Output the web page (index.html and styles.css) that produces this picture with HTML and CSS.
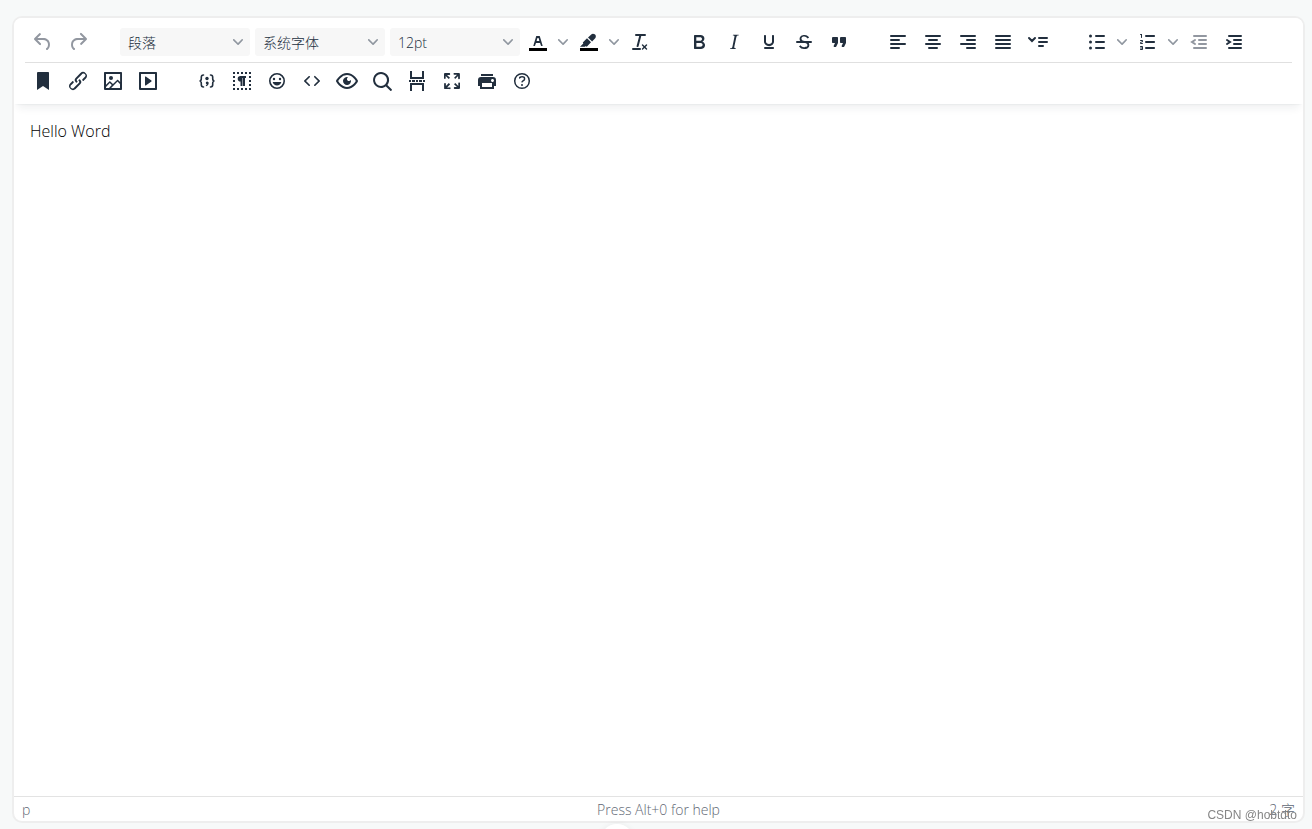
FILE: index.html
```html
<!DOCTYPE html>
<html lang="zh-CN">
<head>
<meta charset="utf-8">
<title>Editor</title>
<link rel="stylesheet" href="styles.css">
</head>
<body>
<svg class="sprite" aria-hidden="true">
  <symbol id="chevron" viewBox="0 0 10 10"><path d="M8.7 2.2c.3-.3.8-.3 1 0 .4.4.4.9 0 1.2L5.7 7.8c-.3.3-.9.3-1.2 0L.2 3.4a.8.8 0 0 1 0-1.2c.3-.3.8-.3 1.1 0L5 6l3.7-3.8Z"/></symbol>
</svg>
<main class="editor">
  <header class="header">
    <div class="toolbar toolbar-first">
      <div class="group">
        <button class="tool" aria-label="撤销" disabled><svg viewBox="0 0 24 24"><path d="M6.4 8H12c3.7 0 6.2 2 6.8 5.1.6 2.7-.4 5.6-2.3 6.8a1 1 0 0 1-1-1.8c1.1-.6 1.8-2.7 1.4-4.6-.5-2.1-2.1-3.5-4.9-3.5H6.4l3.3 3.3a1 1 0 1 1-1.4 1.4l-5-5a1 1 0 0 1 0-1.4l5-5a1 1 0 0 1 1.4 1.4L6.4 8Z"/></svg></button>
        <button class="tool" aria-label="重做" disabled><svg viewBox="0 0 24 24"><path d="M17.6 10H12c-2.8 0-4.4 1.4-4.9 3.5-.4 2 .3 4 1.4 4.6a1 1 0 1 1-1 1.8c-2-1.2-2.9-4.1-2.3-6.8.6-3 3-5.1 6.8-5.1h5.6l-3.3-3.3a1 1 0 1 1 1.4-1.4l5 5a1 1 0 0 1 0 1.4l-5 5a1 1 0 0 1-1.4-1.4l3.3-3.3Z"/></svg></button>
      </div>
      <div class="group">
        <div class="picker"><select aria-label="段落格式"><option>段落</option></select><svg class="chevron"><use href="#chevron"/></svg></div>
        <div class="picker"><select aria-label="字体"><option>系统字体</option></select><svg class="chevron"><use href="#chevron"/></svg></div>
        <div class="picker picker-last"><select aria-label="字号"><option>12pt</option></select><svg class="chevron"><use href="#chevron"/></svg></div>
        <div class="split">
          <button class="tool" aria-label="文字颜色"><svg viewBox="0 0 24 24"><path class="swatch" d="M3 18h18v3H3z"/><path d="M8.7 16h-.8a.5.5 0 0 1-.5-.6l2.7-9c.1-.3.3-.4.5-.4h2.8c.2 0 .4.1.5.4l2.7 9a.5.5 0 0 1-.5.6h-.8a.5.5 0 0 1-.4-.4l-.7-2.2c0-.3-.3-.4-.5-.4h-3.4c-.2 0-.4.1-.5.4l-.7 2.2c0 .3-.2.4-.4.4Zm2.6-7.6-.6 2a.5.5 0 0 0 .5.6h1.6a.5.5 0 0 0 .5-.6l-.6-2c0-.3-.3-.4-.5-.4h-.4c-.2 0-.4.1-.5.4Z"/></svg></button>
          <button class="more" aria-label="选择文字颜色"><svg class="chevron"><use href="#chevron"/></svg></button>
        </div>
        <div class="split">
          <button class="tool" aria-label="背景颜色"><svg viewBox="0 0 24 24"><path class="swatch" d="M3 18h18v3H3z"/><path d="M8 16.700H3l3.300-3.300-.5-.9L10 8.300l4 4-4 4.200c-.2.2-.6.2-.8 0l-.5-.5ZM11 7.400l3-2.700a3 3 0 0 1 3.700-.4l.6.500c.8.900.7 2.600-.1 3.500l-3.100 3.200Z"/></svg></button>
          <button class="more" aria-label="选择背景颜色"><svg class="chevron"><use href="#chevron"/></svg></button>
        </div>
        <button class="tool" aria-label="清除格式"><svg viewBox="0 0 24 24"><path d="M13.2 6a1 1 0 0 1 0 .2l-2.6 10a1 1 0 0 1-1 .8h-.2a.8.8 0 0 1-.8-1l2.6-10H8a1 1 0 1 1 0-2h9a1 1 0 0 1 0 2h-3.8ZM5 18h7a1 1 0 0 1 0 2H5a1 1 0 0 1 0-2Zm13 1.5L16.5 18 15 19.5a.7.7 0 0 1-1-1l1.5-1.5-1.5-1.5a.7.7 0 0 1 1-1l1.5 1.5 1.5-1.5a.7.7 0 0 1 1 1L17.5 17l1.5 1.5a.7.7 0 0 1-1 1Z"/></svg></button>
      </div>
      <div class="group">
        <button class="tool" aria-label="粗体"><svg viewBox="0 0 24 24"><path d="M7.8 19c-.3 0-.5 0-.6-.2l-.2-.5V5.7c0-.2 0-.4.2-.5l.6-.2h5c1.5 0 2.7.3 3.5 1 .7.6 1.1 1.4 1.1 2.5a3 3 0 0 1-.6 1.9c-.4.6-1 1-1.6 1.2.4.1.9.3 1.3.6s.8.7 1 1.2c.4.4.5 1 .5 1.6 0 1.3-.4 2.3-1.3 3-.8.7-2.1 1-3.8 1H7.8Zm5-8.3c.6 0 1.2-.1 1.6-.5.4-.3.6-.7.6-1.3 0-1.1-.8-1.700-2.300-1.700H9.300v3.500h3.400Zm.5 6c.7 0 1.300-.1 1.700-.4.4-.4.6-.9.6-1.500s-.2-1-.7-1.400c-.4-.3-1-.4-2-.4H9.400v3.800h4Z"/></svg></button>
        <button class="tool" aria-label="斜体"><svg viewBox="0 0 24 24"><path d="m16.700 4.700-.1.9h-.3c-.6 0-1 0-1.400.3-.3.3-.4.6-.5 1.100l-2.100 9.800v.6c0 .5.4.8 1.400.8h.2l-.2.8H8l.2-.8h.2c1.100 0 1.800-.5 2-1.500l2-9.800.1-.5c0-.6-.4-.8-1.400-.8h-.3l.2-.9h5.700Z"/></svg></button>
        <button class="tool" aria-label="下划线"><svg viewBox="0 0 24 24"><path d="M16 5c.6 0 1 .4 1 1v5.500a4 4 0 0 1-.4 1.800l-1 1.400a5.300 5.300 0 0 1-5.500 1 5 5 0 0 1-1.600-1c-.5-.4-.8-.9-1.100-1.400a4 4 0 0 1-.4-1.800V6c0-.6.4-1 1-1s1 .4 1 1v5.500c0 .3 0 .6.2 1l.6.7a3.300 3.300 0 0 0 2.200.8 3.400 3.400 0 0 0 2.200-.8c.3-.2.4-.5.6-.8l.2-.9V6c0-.6.4-1 1-1ZM8 17h8c.6 0 1 .4 1 1s-.4 1-1 1H8a1 1 0 0 1 0-2Z"/></svg></button>
        <button class="tool" aria-label="删除线"><svg viewBox="0 0 24 24"><path d="M15.600 8.500c-.5-.7-1-1.100-1.300-1.300-.6-.4-1.300-.6-2-.6-2.700 0-2.800 1.700-2.800 2.100 0 1.600 1.800 2 3.200 2.300 4.400.9 4.600 2.800 4.600 3.900 0 1.400-.7 4.100-5 4.100A6.200 6.200 0 0 1 7 16.400l1.500-1.100c.4.6 1.600 2 3.700 2 1.600 0 2.500-.4 3-1.200.4-.8.3-2-.8-2.600-.7-.4-1.600-.7-2.900-1-1-.2-3.900-.8-3.900-3.600C7.600 6 10.300 5 12.400 5c2.900 0 4.200 1.600 4.700 2.400l-1.500 1.100Z"/><path d="M5 11h14a1 1 0 0 1 0 2H5a1 1 0 0 1 0-2Z"/></svg></button>
        <button class="tool" aria-label="引用"><svg viewBox="0 0 24 24"><path d="M7.500 17h.9c.4 0 .7-.2.9-.6L11 13V8c0-.6-.4-1-1-1H6a1 1 0 0 0-1 1v4c0 .6.4 1 1 1h2l-1.300 2.700a1 1 0 0 0 .8 1.300Zm8 0h.9c.4 0 .7-.2.9-.6L19 13V8c0-.6-.4-1-1-1h-4a1 1 0 0 0-1 1v4c0 .6.4 1 1 1h2l-1.300 2.700a1 1 0 0 0 .8 1.300Z"/></svg></button>
      </div>
      <div class="group">
        <button class="tool" aria-label="左对齐"><svg class="lines" viewBox="0 0 24 24"><path d="M5 6h14M5 10h8M5 14h14M5 18h8"/></svg></button>
        <button class="tool" aria-label="居中"><svg class="lines" viewBox="0 0 24 24"><path d="M5 6h14M8 10h8M5 14h14M8 18h8"/></svg></button>
        <button class="tool" aria-label="右对齐"><svg class="lines" viewBox="0 0 24 24"><path d="M5 6h14M11 10h8M5 14h14M11 18h8"/></svg></button>
        <button class="tool" aria-label="两端对齐"><svg class="lines" viewBox="0 0 24 24"><path d="M5 6h14M5 10h14M5 14h14M5 18h14"/></svg></button>
        <button class="tool" aria-label="行高"><svg class="lines" viewBox="0 0 24 24"><path d="M13 8h8M13 12h8M13 16h4M3 8l3 3 3-3"/></svg></button>
      </div>
      <div class="group">
        <div class="split">
          <button class="tool" aria-label="项目符号"><svg class="lines" viewBox="0 0 24 24"><path d="M11 6h8M11 12h8M11 18h8"/><g class="solid"><circle cx="5.500" cy="6" r="1.500"/><circle cx="5.500" cy="12" r="1.500"/><circle cx="5.500" cy="18" r="1.500"/></g></svg></button>
          <button class="more" aria-label="项目符号样式"><svg class="chevron"><use href="#chevron"/></svg></button>
        </div>
        <div class="split">
          <button class="tool" aria-label="编号列表"><svg viewBox="0 0 24 24"><path d="M10 17h8c.6 0 1 .4 1 1s-.4 1-1 1h-8a1 1 0 0 1 0-2Zm0-6h8c.6 0 1 .4 1 1s-.4 1-1 1h-8a1 1 0 0 1 0-2Zm0-6h8c.6 0 1 .4 1 1s-.4 1-1 1h-8a1 1 0 1 1 0-2ZM6 4v3.500c0 .3-.2.5-.5.5a.5.5 0 0 1-.5-.5V5h-.5a.5.5 0 0 1 0-1H6Zm-1 8.800.2.2h1.300c.3 0 .5.2.5.5s-.2.5-.5.5H4.900a1 1 0 0 1-.9-1V13c0-.4.3-.8.6-1l1.200-.4.2-.3a.2.2 0 0 0-.2-.2H4.500a.5.5 0 0 1-.5-.5c0-.3.2-.5.5-.5h1.600c.5 0 .9.4.9 1v.1c0 .4-.3.8-.6 1l-1.200.4-.2.3ZM7 17v2c0 .6-.4 1-1 1H4.500a.5.5 0 0 1 0-1h1.200c.2 0 .3-.1.3-.3 0-.2-.1-.3-.3-.3H4.400a.4.4 0 1 1 0-.8h1.300c.2 0 .3-.1.3-.3 0-.2-.1-.3-.3-.3H4.500a.5.5 0 1 1 0-1H6c.6 0 1 .4 1 1Z"/></svg></button>
          <button class="more" aria-label="编号样式"><svg class="chevron"><use href="#chevron"/></svg></button>
        </div>
        <button class="tool" aria-label="减少缩进" disabled><svg class="lines" viewBox="0 0 24 24"><path d="M7 6h12M12 10h7M12 14h7M7 18h12M8 10l-3 2 3 2"/></svg></button>
        <button class="tool" aria-label="增加缩进"><svg class="lines" viewBox="0 0 24 24"><path d="M7 6h12M12 10h7M12 14h7M7 18h12M5 10l3 2-3 2"/></svg></button>
      </div>
    </div>
    <div class="toolbar">
      <div class="group">
        <button class="tool" aria-label="锚点"><svg viewBox="0 0 24 24"><path d="M6 4v17l6-4 6 4V4c0-.6-.4-1-1-1H7a1 1 0 0 0-1 1Z"/></svg></button>
        <button class="tool" aria-label="链接"><svg viewBox="0 0 24 24"><path d="M6.2 12.3a1 1 0 0 1 1.4 1.4l-2 2a2 2 0 1 0 2.600 2.800l4.800-4.800a1 1 0 0 0 0-1.400 1 1 0 1 1 1.400-1.300 2.900 2.900 0 0 1 0 4L9.600 20a3.900 3.900 0 0 1-5.500-5.500l2-2Zm11.600-.6a1 1 0 0 1-1.400-1.400l2-2a2 2 0 1 0-2.600-2.800L11 10.300a1 1 0 0 0 0 1.400A1 1 0 1 1 9.600 13a2.900 2.900 0 0 1 0-4L14.400 4a3.900 3.900 0 0 1 5.500 5.500l-2 2Z"/></svg></button>
        <button class="tool" aria-label="图片"><svg viewBox="0 0 24 24"><path fill-rule="evenodd" d="m5 15.700 3.300-3.200c.3-.3.7-.3 1 0L12 15l4.100-4c.3-.4.8-.4 1 0l2 1.900V5H5v10.700ZM5 18v1h3l2.800-2.900-2-2L5 17.900Zm14-3-2.500-2.400-6.400 6.500H19v-4ZM4 3h16c.6 0 1 .4 1 1v16c0 .6-.4 1-1 1H4a1 1 0 0 1-1-1V4c0-.6.4-1 1-1Z"/><circle cx="10" cy="9" r="2"/></svg></button>
        <button class="tool" aria-label="媒体"><svg viewBox="0 0 24 24"><path d="M4 3h16c.6 0 1 .4 1 1v16c0 .6-.4 1-1 1H4a1 1 0 0 1-1-1V4c0-.6.4-1 1-1Zm1 2v14h14V5H5Zm4.800 2.600 5.600 4a.5.5 0 0 1 0 .8l-5.600 4A.5.5 0 0 1 9 16V8a.5.5 0 0 1 .8-.4Z" fill-rule="evenodd"/></svg></button>
      </div>
      <div class="group">
        <button class="tool" aria-label="代码示例"><svg class="outline" viewBox="0 0 24 24"><path d="M8.500 6C7 6 6.300 7 6.300 8.200v1.600c0 1.300-.7 2.200-1.800 2.200 1.100 0 1.800.9 1.800 2.200v1.600C6.300 17 7 18 8.500 18M15.500 6c1.500 0 2.200 1 2.200 2.200v1.600c0 1.300.7 2.200 1.800 2.200-1.100 0-1.800.9-1.800 2.200v1.600c0 1.200-.7 2.200-2.200 2.200"/><g class="solid"><circle cx="12" cy="9.500" r="1.700"/><path d="M12 12.400a1.600 1.600 0 0 1 1.700 1.700c0 1.500-.9 2.700-2.500 3.200l-.5-.9c.6-.2 1-.6 1.100-1.100a1.500 1.500 0 0 1 .2-2.900Z"/></g></svg></button>
        <button class="tool" aria-label="显示块"><svg viewBox="0 0 24 24"><path d="M3 3h2v2H3zM7 3h2v2H7zM11 3h2v2h-2zM15 3h2v2h-2zM19 3h2v2h-2zM3 7h2v2H3zM3 11h2v2H3zM3 15h2v2H3zM3 19h2v2H3zM7 19h2v2H7zM11 19h2v2h-2zM15 19h2v2h-2zM19 19h2v2h-2zM19 15h2v2h-2zM19 11h2v2h-2zM19 7h2v2h-2z"/><path d="M10.500 7H16v2h-1v8h-2V9h-.5v8h-2v-4.400a2.800 2.800 0 0 1 0-5.600Z"/></svg></button>
        <button class="tool" aria-label="表情"><svg class="outline" viewBox="0 0 24 24"><circle cx="12" cy="12" r="7.200"/><g class="solid"><circle cx="9" cy="10" r="1.200"/><circle cx="15" cy="10" r="1.200"/><path d="M7.700 13h8.600c-.5 2.200-2.200 3.500-4.300 3.500S8.200 15.200 7.700 13Z"/></g></svg></button>
        <button class="tool" aria-label="源代码"><svg viewBox="0 0 24 24"><path d="M9.800 15.700c.3.3.3.8 0 1-.3.4-.9.4-1.200 0l-4.400-4.100a.8.8 0 0 1 0-1.200l4.400-4.200c.3-.3.9-.3 1.200 0 .3.3.3.8 0 1.100L6 12l3.800 3.700ZM14.200 15.700c-.3.3-.3.8 0 1 .4.4.9.4 1.200 0l4.400-4.100c.3-.3.3-.9 0-1.200l-4.400-4.200a.8.8 0 0 0-1.200 0c-.3.3-.3.8 0 1.100L18 12l-3.800 3.700Z"/></svg></button>
        <button class="tool" aria-label="预览"><svg viewBox="0 0 24 24"><path fill-rule="evenodd" d="M3.500 12.500c.5.8 1.100 1.600 1.800 2.300 2 2 4.200 3.200 6.700 3.200s4.700-1.200 6.700-3.200a16.200 16.200 0 0 0 2.100-2.800 15.700 15.700 0 0 0-2.100-2.800c-2-2-4.200-3.200-6.700-3.200a9.300 9.300 0 0 0-6.700 3.200A16.200 16.200 0 0 0 3.200 12c0 .2.2.3.3.5Zm-2.400-1 .7-1.200L4 7.800C6.200 5.400 8.900 4 12 4c3 0 5.800 1.400 8.100 3.800a18.200 18.200 0 0 1 2.800 3.700v1l-.7 1.200-2.100 2.500c-2.300 2.400-5 3.800-8.100 3.800-3 0-5.800-1.400-8.100-3.800a18.200 18.200 0 0 1-2.800-3.700 1 1 0 0 1 0-1Zm12-3.300a2 2 0 1 0 2.700 2.600 4 4 0 1 1-2.600-2.600Z"/></svg></button>
        <button class="tool" aria-label="查找"><svg viewBox="0 0 24 24"><path fill-rule="evenodd" d="M16 17.300a8 8 0 1 1 1.400-1.400l4.300 4.400a1 1 0 0 1-1.400 1.400l-4.400-4.300Zm-5-.3a6 6 0 1 0 0-12 6 6 0 0 0 0 12Z"/></svg></button>
        <button class="tool" aria-label="分页符"><svg viewBox="0 0 24 24"><path d="M5 2h2v6h10V2h2v8H5zM5 22h2v-6h10v6h2v-8H5zM4 11h2v2H4zM7 11h3v2H7zM11 11h2v2h-2zM14 11h3v2h-3zM18 11h2v2h-2z"/></svg></button>
        <button class="tool" aria-label="全屏"><svg viewBox="0 0 24 24"><path d="m15.300 10-1.200-1.300 2.900-3h-2.300a.9.9 0 1 1 0-1.700H19c.5 0 .9.4.9.9v4.400a.9.9 0 1 1-1.800 0V7l-2.900 3Zm0 4 3 3v-2.300a.9.9 0 1 1 1.700 0V19c0 .5-.4.9-.9.9h-4.400a.9.9 0 1 1 0-1.800H17l-3-2.900 1.300-1.200ZM10 15.400l-2.900 3h2.300a.9.9 0 1 1 0 1.700H5a.9.9 0 0 1-.9-.9v-4.400a.9.9 0 1 1 1.800 0V17l2.900-3 1.200 1.300ZM8.700 10 5.700 7v2.300a.9.9 0 0 1-1.700 0V5c0-.5.4-.9.9-.9h4.400a.9.9 0 0 1 0 1.800H7l3 2.900-1.300 1.200Z"/></svg></button>
        <button class="tool" aria-label="打印"><svg viewBox="0 0 24 24"><path fill-rule="evenodd" d="M18 8H6a3 3 0 0 0-3 3v6h2v3h14v-3h2v-6a3 3 0 0 0-3-3Zm-1 10H7v-4h10v4Zm.5-5c-.8 0-1.500-.7-1.500-1.500s.7-1.500 1.500-1.500 1.500.7 1.500 1.500-.7 1.500-1.500 1.500ZM18 5H6v2h12V5Z"/></svg></button>
        <button class="tool" aria-label="帮助"><svg viewBox="0 0 24 24"><circle class="ring" cx="12" cy="12" r="7.300"/><path d="M9.600 9.700a.7.7 0 0 1-.7-.8c0-1.100 1.500-1.800 3.200-1.800 1.800 0 3.200.8 3.200 2.400 0 1.400-.4 2.100-1.500 2.800-.2 0-.3.1-.3.2a2 2 0 0 0-.8.8.8.8 0 0 1-1.400-.6c.3-.7.8-1 1.300-1.500l.4-.2c.7-.4.8-.6.8-1.500 0-.5-.6-.9-1.700-.9-.5 0-1 .1-1.400.3-.2 0-.3.1-.3.2 0 .3-.4.6-.8.6Z"/><circle cx="12" cy="16" r="1"/></svg></button>
      </div>
    </div>
  </header>
  <article class="content" contenteditable="true" spellcheck="false" aria-label="正文"><p>Hello Word</p></article>
  <footer class="status">
    <span class="path">p</span>
    <span class="hint">Press Alt+0 for help</span>
    <span class="count">2 字</span>
  </footer>
</main>
<span class="watermark">CSDN @hobtdto</span>
<span class="bubble"></span>
</body>
</html>
```
FILE: styles.css
```css
* {
  box-sizing: border-box;
}

body {
  margin: 0;
  height: 100vh;
  padding: 16px 7px 6px 12px;
  display: flex;
  overflow: hidden;
  background: #f7f9f9;
  color: #222f3e;
  font-family: "Open Sans", "Noto Sans CJK SC", sans-serif;
  font-size: 14px;
  font-weight: 300;
}

.sprite {
  position: absolute;
  width: 0;
  height: 0;
}

.editor {
  flex: 1;
  min-width: 0;
  display: flex;
  flex-direction: column;
  overflow: hidden;
  background: #fff;
  border: 2px solid #eee;
  border-radius: 10px;
}

.header {
  position: relative;
  padding: 4px 11px 5px;
  background: #fff;
  box-shadow: 0 2px 2px -2px rgba(34, 47, 62, .1), 0 8px 8px -4px rgba(34, 47, 62, .07);
}

.toolbar {
  display: flex;
  flex-wrap: wrap;
  gap: 0 24px;
  padding: 4px 1px;
}

.toolbar-first {
  padding-top: 6px;
  padding-bottom: 6px;
  border-bottom: 1px solid #e0e0e0;
}

.group,
.split {
  display: flex;
}

button {
  display: flex;
  align-items: center;
  justify-content: center;
  padding: 0;
  border: 0;
  border-radius: 3px;
  background: none;
  color: inherit;
}

.tool {
  width: 34px;
  height: 28px;
  margin-right: 1px;
}

.tool:disabled {
  color: #9297a0;
}

.tool svg {
  width: 24px;
  height: 24px;
  fill: currentColor;
}

.split {
  margin-right: 1px;
}

.split .tool {
  margin-right: 0;
}

.more {
  width: 16px;
  height: 28px;
}

.chevron {
  width: 10px;
  height: 10px;
  fill: #9097a0;
}

.tool .lines,
.tool .outline {
  fill: none;
  stroke: currentColor;
  stroke-width: 2;
  stroke-linecap: round;
}

.tool .outline {
  stroke-width: 1.6;
}

.tool .solid {
  fill: currentColor;
  stroke: none;
}

.ring {
  fill: none;
  stroke: currentColor;
  stroke-width: 1.5;
}

.swatch {
  fill: #000;
}

.picker {
  position: relative;
  width: 130px;
  height: 28px;
  margin-right: 5px;
}

.picker-last {
  margin-right: 1px;
}

.picker select {
  width: 100%;
  height: 100%;
  padding: 0 24px 0 8px;
  appearance: none;
  border: 0;
  border-radius: 3px;
  background: #f7f7f7;
  color: inherit;
  font: inherit;
}

.picker .chevron {
  position: absolute;
  top: 9px;
  right: 7px;
  pointer-events: none;
}

.content {
  flex: 1;
  padding: 16px;
  outline: 0;
  color: #000;
  font-size: 16px;
  line-height: 22px;
}

.content p {
  margin: 0;
}

.status {
  display: grid;
  grid-template-columns: 1fr auto 1fr;
  align-items: center;
  height: 25px;
  padding: 0 8px;
  border-top: 1px solid #e3e3e3;
  color: #5f6874;
}

.count {
  justify-self: end;
}

.watermark {
  position: fixed;
  right: 15px;
  bottom: 6px;
  color: #858585;
  font: 12px/16px "Liberation Sans", sans-serif;
}

.bubble {
  position: fixed;
  left: calc(47% - 17px);
  bottom: -29px;
  width: 34px;
  height: 34px;
  border-radius: 50%;
  background: #fff;
  box-shadow: 0 0 6px rgba(0, 0, 0, .06);
}
```
